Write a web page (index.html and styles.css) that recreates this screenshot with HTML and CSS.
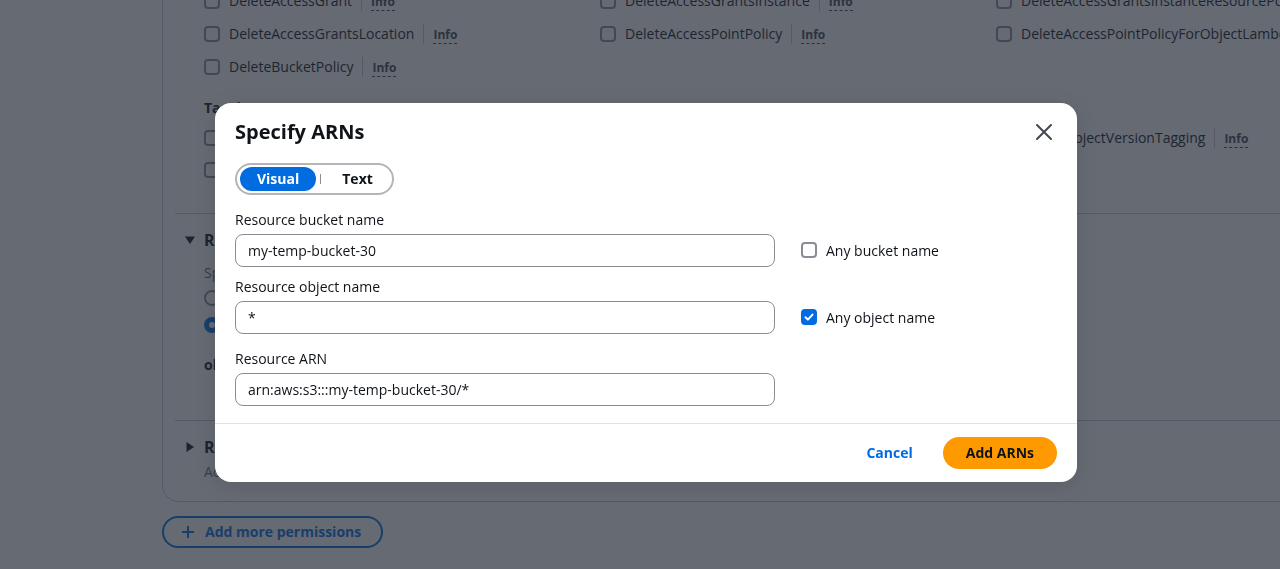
FILE: index.html
```html
<!DOCTYPE html>
<html lang="en">
<head>
<meta charset="utf-8">
<title>Specify ARNs</title>
<link rel="stylesheet" href="styles.css">
</head>
<body>
<main class="page">
  <section class="card">
    <div class="actions">
      <div class="action-grid">
        <div class="action"><span class="cb"></span><span>DeleteAccessGrant</span><span class="sep"></span><span class="info">Info</span></div>
        <div class="action"><span class="cb"></span><span>DeleteAccessGrantsInstance</span><span class="sep"></span><span class="info">Info</span></div>
        <div class="action"><span class="cb"></span><span>DeleteAccessGrantsInstanceResourcePolicy</span><span class="sep"></span><span class="info">Info</span></div>
        <div class="action"><span class="cb"></span><span>DeleteAccessGrantsLocation</span><span class="sep"></span><span class="info">Info</span></div>
        <div class="action"><span class="cb"></span><span>DeleteAccessPointPolicy</span><span class="sep"></span><span class="info">Info</span></div>
        <div class="action"><span class="cb"></span><span>DeleteAccessPointPolicyForObjectLambda</span><span class="sep"></span><span class="info">Info</span></div>
        <div class="action"><span class="cb"></span><span>DeleteBucketPolicy</span><span class="sep"></span><span class="info">Info</span></div>
      </div>
      <h3 class="group-title">Tagging</h3>
      <div class="action-grid tag-grid">
        <div class="action"><span class="cb"></span><span>DeleteJobTagging</span><span class="sep"></span><span class="info">Info</span></div>
        <div class="action"><span class="cb"></span><span>DeleteObjectTagging</span><span class="sep"></span><span class="info">Info</span></div>
        <div class="action"><span class="cb"></span><span>DeleteObjectVersionTagging</span><span class="sep"></span><span class="info">Info</span></div>
        <div class="action"><span class="cb"></span><span>DeleteStorageLensConfigurationTagging</span><span class="sep"></span><span class="info">Info</span></div>
      </div>
    </div>

    <div class="section">
      <div class="section-head">
        <svg class="caret" width="10" height="10" viewBox="0 0 10 10"><path d="M0 1.5h10L5 9z" fill="#0f141a"/></svg>
        <h2>Resources</h2>
      </div>
      <p class="desc">Specify resource ARNs for these actions.</p>
      <div class="radio-row"><span class="radio"></span><span>All</span></div>
      <div class="radio-row"><span class="radio on"></span><span>Specific</span></div>
      <div class="res-line"><strong>object</strong></div>
    </div>

    <div class="section last">
      <div class="section-head">
        <svg class="caret" width="10" height="10" viewBox="0 0 10 10"><path d="M1.5 0v10L9 5z" fill="#0f141a"/></svg>
        <h2>Request conditions - <i>optional</i></h2>
      </div>
      <p class="desc">Actions on resources are allowed or denied only when these conditions are met.</p>
    </div>
  </section>

  <button class="add-more" type="button">
    <svg width="12" height="12" viewBox="0 0 12 12"><path d="M6 0v12M0 6h12" stroke="#006ce0" stroke-width="2"/></svg>
    <span>Add more permissions</span>
  </button>
</main>

<div class="overlay">
  <div class="modal" role="dialog" aria-label="Specify ARNs">
    <header class="modal-head">
      <h2 class="modal-title">Specify ARNs</h2>
      <button class="close" type="button" aria-label="Close">
        <svg width="18" height="18" viewBox="0 0 18 18"><path d="M2 2l14 14M16 2L2 16" stroke="#424650" stroke-width="2" stroke-linecap="round"/></svg>
      </button>
    </header>

    <div class="modal-body">
      <div class="seg">
        <button class="seg-btn active" type="button">Visual</button>
        <span class="seg-sep"></span>
        <button class="seg-btn" type="button">Text</button>
      </div>

      <div class="field-row row1">
        <div class="field">
          <div class="label">Resource bucket name</div>
          <div class="input">my-temp-bucket-30</div>
        </div>
        <div class="check"><span class="cb"></span><span>Any bucket name</span></div>
      </div>

      <div class="field-row row2">
        <div class="field">
          <div class="label">Resource object name</div>
          <div class="input">*</div>
        </div>
        <div class="check"><span class="cb checked"><svg width="12" height="12" viewBox="0 0 12 12"><path d="M2.5 6.2l2.4 2.4 4.6-5" stroke="#fff" stroke-width="2" fill="none" stroke-linecap="round" stroke-linejoin="round"/></svg></span><span>Any object name</span></div>
      </div>

      <div class="field-row row3">
        <div class="field">
          <div class="label">Resource ARN</div>
          <div class="input">arn:aws:s3:::my-temp-bucket-30/*</div>
        </div>
      </div>
    </div>

    <footer class="modal-foot">
      <button class="link-btn" type="button">Cancel</button>
      <button class="primary" type="button">Add ARNs</button>
    </footer>
  </div>
</div>
</body>
</html>
```

FILE: styles.css
```css
* { box-sizing: border-box; }

html, body {
  margin: 0;
  height: 100%;
  overflow: hidden;
}

body {
  font-family: "Open Sans", "Noto Sans", sans-serif;
  font-size: 14px;
  line-height: 22px;
  color: #0f141a;
  background: #ffffff;
}

button {
  font-family: inherit;
  font-size: 14px;
  line-height: 22px;
  background: none;
  border: none;
  padding: 0;
  cursor: pointer;
}

/* ---------- background page ---------- */
.page {
  padding-left: 162px;
}

.card {
  width: 1240px;
  margin-top: -17px;
  border: 1px solid #c6c6cd;
  border-radius: 16px;
  padding: 0 12px;
}

.actions {
  padding-left: 29px;
  padding-bottom: 27px;
}

.action-grid {
  display: grid;
  grid-template-columns: 396px 396px 396px;
  grid-auto-rows: 33px;
}

.tag-grid {
  grid-auto-rows: 32px;
}

.action {
  display: flex;
  align-items: center;
  gap: 9px;
  white-space: nowrap;
}

.cb {
  flex: none;
  width: 16px;
  height: 16px;
  border: 2px solid #8c8c94;
  border-radius: 4px;
  background: #fff;
  display: inline-flex;
  align-items: center;
  justify-content: center;
}

.cb.checked {
  background: #006ce0;
  border-color: #006ce0;
}

.sep {
  width: 1px;
  height: 20px;
  background: #c6c6cd;
}

.info {
  margin-top: 3px;
  font-size: 12px;
  line-height: 16px;
  font-weight: 700;
  color: #424650;
  border-bottom: 1px dashed #424650;
}

.group-title {
  margin: 14px 0 3px;
  font-size: 14px;
  line-height: 22px;
  font-weight: 700;
}

.section {
  border-top: 1px solid #c6c6cd;
  padding: 15px 0 44px 10px;
}

.section.last {
  padding-bottom: 18px;
}

.section-head {
  display: flex;
  align-items: center;
  gap: 9px;
}

.caret {
  flex: none;
}

.section-head h2 {
  margin: 0;
  font-size: 16px;
  line-height: 22px;
  font-weight: 700;
}

.section-head h2 i {
  font-weight: 400;
}

.desc {
  margin: 11px 0 0 19px;
  color: #656871;
}

.section.last .desc {
  margin-top: 3px;
}

.radio-row {
  margin-left: 19px;
  height: 27px;
  display: flex;
  align-items: center;
  gap: 9px;
}

.radio-row:first-of-type {
  margin-top: 3px;
}

.radio {
  width: 16px;
  height: 16px;
  border: 2px solid #8c8c94;
  border-radius: 50%;
  background: #fff;
}

.radio.on {
  border: 5px solid #006ce0;
}

.res-line {
  margin: 16px 0 0 19px;
}

.add-more {
  margin-top: 14px;
  height: 32px;
  padding: 0 20px 0 18px;
  display: flex;
  align-items: center;
  gap: 11px;
  border: 2px solid #006ce0;
  border-radius: 16px;
  color: #006ce0;
  font-weight: 700;
}

/* ---------- overlay + modal ---------- */
.overlay {
  position: fixed;
  inset: 0;
  background: rgba(35, 43, 55, 0.7);
}

.modal {
  position: absolute;
  left: 215px;
  top: 103px;
  width: 862px;
  background: #ffffff;
  border-radius: 16px;
  box-shadow: 0 4px 20px 1px rgba(0, 7, 22, 0.1);
}

.modal-head {
  display: flex;
  align-items: center;
  justify-content: space-between;
  padding: 17px 21px 0 20px;
}

.modal-title {
  margin: 0;
  font-size: 20px;
  line-height: 24px;
  font-weight: 700;
}

.close {
  width: 24px;
  height: 24px;
  display: flex;
  align-items: center;
  justify-content: center;
}

.modal-body {
  padding: 19px 20px 17px;
}

.seg {
  display: flex;
  width: fit-content;
  align-items: center;
  height: 32px;
  padding: 0 3px;
  border: 2px solid #b4b4bb;
  border-radius: 16px;
}

.seg-btn {
  height: 24px;
  line-height: 24px;
  padding: 0 17px;
  border-radius: 12px;
  font-weight: 700;
  color: #0f141a;
}

.seg-btn.active {
  background: #006ce0;
  color: #ffffff;
}

.seg-sep {
  width: 1px;
  height: 10px;
  background: #8c8c94;
  margin: 0 2px 0 4px;
}

.seg-sep + .seg-btn {
  padding: 0 16px 0 19px;
}

.field-row {
  display: flex;
  align-items: flex-end;
}

.row1 { margin-top: 14px; }
.row2 { margin-top: 9px; }
.row3 { margin-top: 14px; }

.field {
  width: 540px;
}

.label {
  line-height: 22px;
  margin-bottom: 3px;
}

.input {
  height: 33px;
  border: 1px solid #8c8c94;
  border-radius: 8px;
  padding: 5px 12px;
  line-height: 21px;
  color: #0f141a;
}

.check {
  height: 33px;
  margin-left: 26px;
  display: flex;
  align-items: center;
  gap: 9px;
}

.check .cb {
  margin-top: -2px;
}

.modal-foot {
  border-top: 1px solid #e0e2e6;
  padding: 13px 20px;
  display: flex;
  justify-content: flex-end;
  align-items: center;
  gap: 10px;
}

.link-btn {
  height: 32px;
  padding: 0 20px;
  color: #006ce0;
  font-weight: 700;
}

.primary {
  height: 32px;
  padding: 0 23px;
  border-radius: 16px;
  background: #ff9900;
  color: #0f141a;
  font-weight: 700;
}
```
